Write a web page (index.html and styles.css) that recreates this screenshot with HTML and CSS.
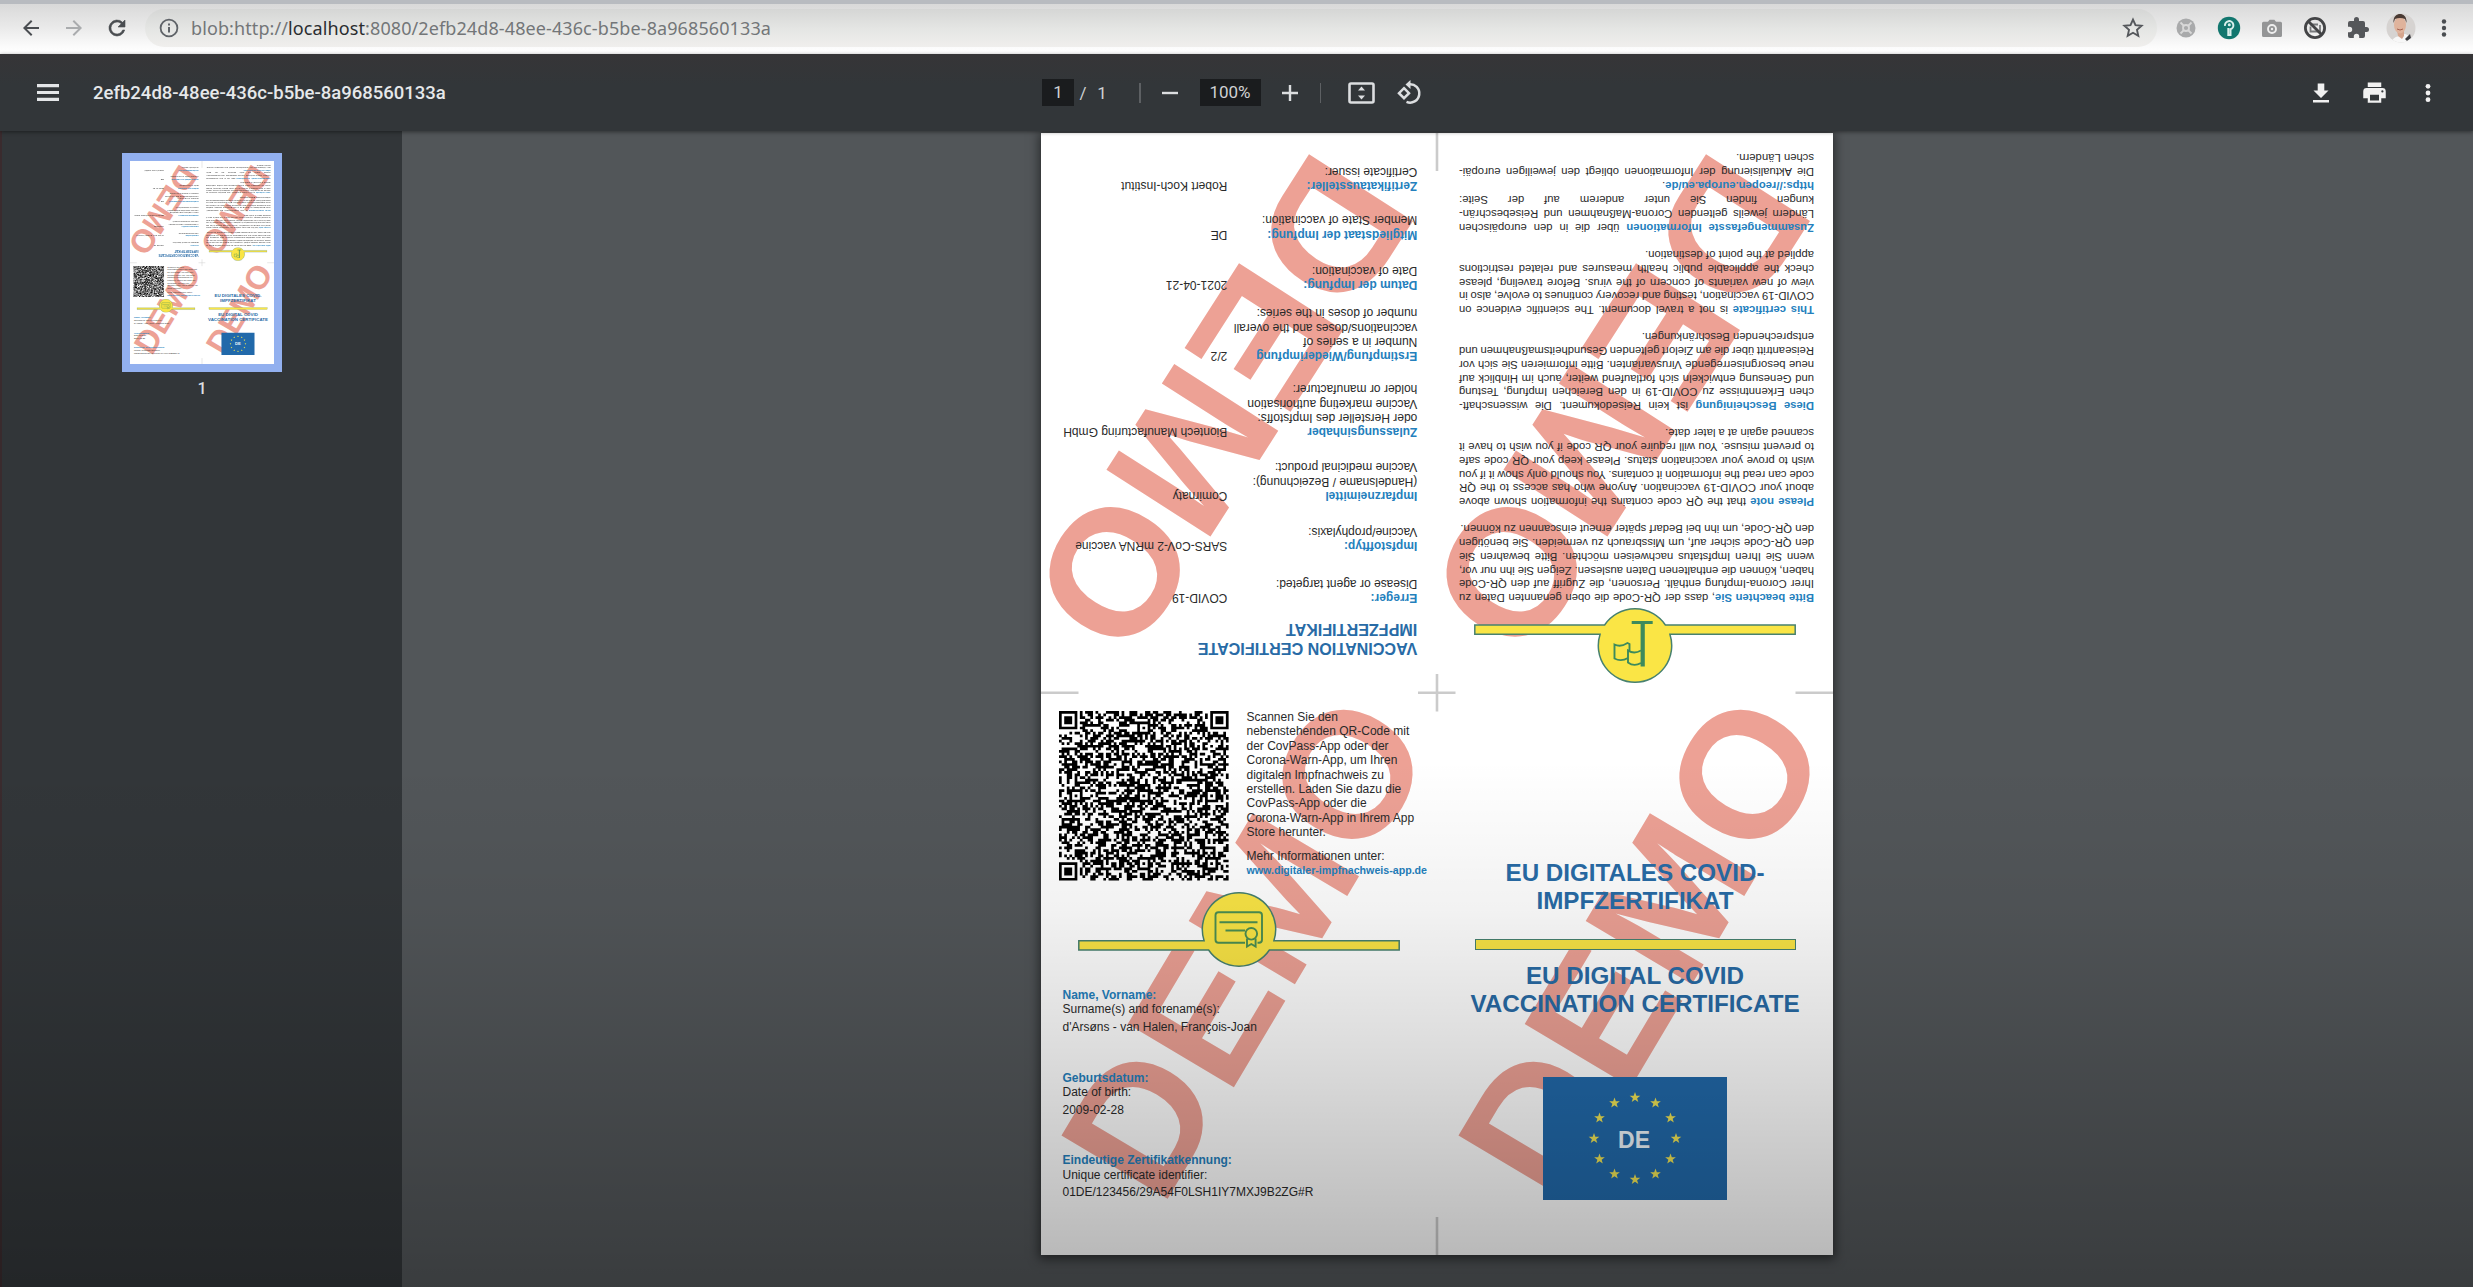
FILE: index.html
```html
<!DOCTYPE html>
<html lang="de">
<head>
<meta charset="utf-8">
<title>2efb24d8-48ee-436c-b5be-8a968560133a</title>
<link rel="stylesheet" href="styles.css">
</head>
<body>
<header class="browser">
  <nav class="nav">
    <svg class="i24" viewBox="0 0 24 24"><path d="M20 11H7.800l5.600-5.600L12 4l-8 8 8 8 1.400-1.400L7.800 13H20z" fill="#4a4d51"/></svg>
    <svg class="i24" viewBox="0 0 24 24"><path d="M4 11h12.200l-5.600-5.600L12 4l8 8-8 8-1.400-1.400 5.600-5.600H4z" fill="#aaacae"/></svg>
    <svg class="i24" viewBox="0 0 24 24"><path d="M17.650 6.350A8 8 0 1 0 19.730 14h-2.080A6 6 0 1 1 12 6c1.660 0 3.140.690 4.220 1.780L13 11h7V4z" fill="#4a4d51" stroke="#4a4d51" stroke-width=".6"/></svg>
  </nav>
  <div class="address">
    <svg class="info" viewBox="0 0 20 20"><circle cx="10" cy="10" r="8.400" fill="none" stroke="#5f6368" stroke-width="1.800"/><path d="M9 9h2v5.400H9zM9 5.600h2v2H9z" fill="#5f6368"/></svg>
    <span class="url">blob:http://<b>localhost</b>:8080/2efb24d8-48ee-436c-b5be-8a968560133a</span>
    <svg class="star" viewBox="0 0 24 24"><path d="M12 3.600l2.500 5.600 6.100.6-4.600 4.100 1.300 6L12 16.800l-5.300 3.100 1.300-6L3.400 9.800l6.100-.6z" fill="none" stroke="#55585c" stroke-width="1.900"/></svg>
  </div>
  <div class="extensions">
    <svg class="i24" viewBox="0 0 24 24"><circle cx="12" cy="12" r="9.500" fill="#a9aaab"/><g fill="none" stroke="#d8d8d8" stroke-width="1.800"><circle cx="12" cy="12" r="3"/><path d="M6.500 6.500l3 3M17.500 6.500l-3 3M6.500 17.500l3-3M17.500 17.500l-3-3"/></g></svg>
    <svg class="i24" viewBox="0 0 24 24"><circle cx="12" cy="12" r="11.200" fill="#12776f"/><path d="M8 9.800a4.200 4.200 0 1 1 5.500 3.500V19h-2.200v-7" fill="none" stroke="#d9efec" stroke-width="2"/><circle cx="12.300" cy="8.800" r="1.500" fill="#d9efec"/></svg>
    <svg class="i24" viewBox="0 0 24 24"><path d="M3.500 5.800H8l1.600-2h4.800l1.600 2h4.500A1.500 1.500 0 0 1 22 7.300v12.200a1.500 1.500 0 0 1-1.500 1.500h-17A1.500 1.500 0 0 1 2 19.500V7.300a1.500 1.500 0 0 1 1.500-1.500z" fill="#949596"/><circle cx="12" cy="13" r="4" fill="none" stroke="#eee" stroke-width="1.900"/><circle cx="12" cy="13" r="1.200" fill="#eee"/></svg>
    <svg class="i24" viewBox="0 0 24 24"><circle cx="12" cy="12" r="9.600" fill="none" stroke="#434446" stroke-width="2.800"/><path d="M7 8.500h8M17 9v7M7.500 10.500v5H15" fill="none" stroke="#77797b" stroke-width="1.800"/><path d="M5 5l14 14" stroke="#434446" stroke-width="2.800"/></svg>
    <svg class="i24" viewBox="0 0 24 24"><path d="M20.500 11H19V7a2 2 0 0 0-2-2h-4V3.500a2.500 2.500 0 0 0-5 0V5H4a2 2 0 0 0-2 2v3.800h1.500a2.700 2.700 0 0 1 0 5.400H2V20a2 2 0 0 0 2 2h3.800v-1.500a2.700 2.700 0 0 1 5.400 0V22H17a2 2 0 0 0 2-2v-4h1.500a2.500 2.500 0 0 0 0-5z" fill="#55575a"/></svg>
    <svg class="avatar" viewBox="0 0 30 30"><defs><clipPath id="face"><circle cx="15" cy="15" r="14.500"/></clipPath></defs><g clip-path="url(#face)"><path fill="#d6d3d1" d="M0 0h30v30H0z"/><path fill="#f7f7f7" d="M6 30c0-5 4-6 7-7l6-2c4 1 7 4 7 9z"/><path fill="#d5a58d" d="M11 17h7v6l-2 3-4-3z"/><ellipse cx="14" cy="12" rx="6" ry="8.500" fill="#dfb39c"/><path fill="#4a3a33" d="M7.500 10C7 3 11 1 14 1s7 2 6.500 9l-1.500-4c-3-1.500-7-1.500-10 0z"/><path d="M11 16q3 2 6 0" stroke="#a5604f" fill="none"/><path fill="#3c3c40" d="M19 26l5-5 1 4-4 3z"/></g></svg>
    <svg class="i24" viewBox="0 0 24 24" fill="#4a4d51"><circle cx="12" cy="5.500" r="2.200"/><circle cx="12" cy="12" r="2.200"/><circle cx="12" cy="18.500" r="2.200"/></svg>
  </div>
</header>

<div class="toolbar">
  <div class="tb-left">
    <svg class="menu" viewBox="0 0 22 17" fill="#e4e6e8"><path d="M0 0h22v3.200H0zM0 6.900h22v3.200H0zM0 13.800h22V17H0z"/></svg>
    <span class="doc-title">2efb24d8-48ee-436c-b5be-8a968560133a</span>
  </div>
  <div class="tb-center">
    <span class="field page-no">1</span><span class="slash">/</span><span class="total">1</span>
    <i class="sep s1"></i>
    <svg class="pm" viewBox="0 0 18 18"><path d="M1 9h16" stroke="#dcdee0" stroke-width="2.400"/></svg>
    <span class="field zoom">100%</span>
    <svg class="pm plus" viewBox="0 0 18 18"><path d="M1 9h16M9 1v16" stroke="#dcdee0" stroke-width="2.400"/></svg>
    <i class="sep s2"></i>
    <svg class="fit" viewBox="0 0 27 22"><rect x="1.500" y="1.500" width="24" height="19" rx="1.500" fill="none" stroke="#dcdee0" stroke-width="2.600"/><path d="M13.500 4.500l3.500 4h-7zM13.500 17.500l3.500-4h-7z" fill="#dcdee0"/></svg>
    <svg class="rot" viewBox="0 0 26 26"><g fill="none" stroke="#dcdee0" stroke-width="2.500"><path d="M8 8.200l5 5-5 5-5-5z"/><path d="M13 4.300a9.200 9.200 0 1 1-2.500 17.600"/></g><path d="M14.500 0v9L9.500 4.500z" fill="#dcdee0"/></svg>
  </div>
  <div class="tb-right">
    <svg class="i24" viewBox="0 0 24 24" fill="#f1f1f1"><path d="M19.500 9.500H15.300V2.500H8.700v7H4.500L12 17zM4 19v2.500h16V19z"/></svg>
    <svg class="i26" viewBox="0 0 24 24" fill="#f1f1f1"><path d="M19 8H5a3 3 0 0 0-3 3v6h4v4h12v-4h4v-6a3 3 0 0 0-3-3zm-3 11H8v-5h8zm3-7a1 1 0 1 1 0-2 1 1 0 0 1 0 2zM18 3H6v4h12z"/></svg>
    <svg class="i24" viewBox="0 0 24 24" fill="#f1f1f1"><circle cx="12" cy="5.300" r="2.400"/><circle cx="12" cy="12" r="2.400"/><circle cx="12" cy="18.700" r="2.400"/></svg>
  </div>
</div>

<div class="viewer">
  <aside class="sidebar">
    <div class="thumb" aria-hidden="true"></div>
    <span class="thumb-no">1</span>
  </aside>
  <main class="stage">
    <article class="sheet">
      <svg class="marks" viewBox="0 0 792 1122">
        <g class="demo">
          <text transform="translate(274.500 11.200) rotate(122.700)">DEMO</text>
          <text transform="translate(671.500 11.200) rotate(122.700)">DEMO</text>
          <text transform="translate(120.500 1076) rotate(-59.300)">DEMO</text>
          <text transform="translate(517.500 1076) rotate(-59.300)">DEMO</text>
        </g>
        <path d="M0 559.700h37.500M377 559.700h37.500M754.500 559.700H792M396 0v38M396 541v37.500M396 1084v38" fill="none" stroke="#cbcbcb" stroke-width="2.600"/>
      </svg>

      <section class="panel flipped data">
        <h2>VACCINATION CERTIFICATE<br>IMPFZERTIFIKAT</h2>
        <dl>
          <dt><b>Erreger:</b><br>Disease or agent targeted:</dt><dd>COVID-19</dd>
          <dt><b>Impfstofftyp:</b><br>Vaccine/prophylaxis:</dt><dd>SARS-CoV-2 mRNA vaccine</dd>
          <dt><b>Impfarzneimittel</b><br>(Handelsname / Bezeichnung):<br>Vaccine medicinal product:</dt><dd>Comirnaty</dd>
          <dt><b>Zulassungsinhaber</b><br>oder Hersteller des Impfstoffs:<br>Vaccine marketing authorisation<br>holder or manufacturer:</dt><dd>Biontech Manufacturing GmbH</dd>
          <dt><b>Erstimpfung/Wiederimpfung</b><br>Number in a series of<br>vaccinations/doses and the overall<br>number of doses in the series:</dt><dd>2/2</dd>
          <dt><b>Datum der Impfung:</b><br>Date of vaccination:</dt><dd>2021-04-21</dd>
          <dt><b>Mitgliedstaat der Impfung:</b><br>Member State of vaccination:</dt><dd>DE</dd>
          <dt><b>Zertifikataussteller:</b><br>Certificate issuer:</dt><dd>Robert Koch-Institut</dd>
        </dl>
      </section>

      <section class="panel flipped notes">
        <svg class="badge" viewBox="0 0 322 75">
          <path d="M.8 48.800H126.100A36.700 36.700 0 1 1 195.900 48.800H321.200V58H191.400A36.700 36.700 0 0 1 130.600 58H.8z" fill="#fae545" stroke="#47816f" stroke-width="1.500"/>
          <g transform="translate(161 37.500)" fill="none" stroke="#3d8a5c" stroke-width="1.900"><path d="M-17.700 23H3.300" stroke-width="3"/><path d="M-7.700-21V23" stroke-width="4.200"/><path d="M-6-17.500q7-4 13 .5V-5q-6-4-13 0M7-12.500q7-4 13.500-.5V1q-6-3-13 1.500l-2-1V-5"/></g>
        </svg>
        <p><span><b>Bitte beachten Sie</b>, dass der QR-Code die oben genannten Daten zu</span><span>Ihrer Corona-Impfung enthält. Personen, die Zugriff auf den QR-Code</span><span>haben, können die enthaltenen Daten auslesen. Zeigen Sie ihn nur vor,</span><span>wenn Sie Ihren Impfstatus nachweisen möchten. Bitte bewahren Sie</span><span>den QR-Code sicher auf, um Missbrauch zu vermeiden. Sie benötigen</span><span>den QR-Code, um ihn bei Bedarf später erneut einscannen zu können.</span></p>
        <p><span><b>Please note</b> that the QR code contains the information shown above</span><span>about your COVID-19 vaccination. Anyone who has access to the QR</span><span>code can read the information it contains. You should only show it if you</span><span>wish to prove your vaccination status. Please keep your QR code safe</span><span>to prevent misuse. You will require your QR code if you wish to have it</span><span>scanned again at a later date.</span></p>
        <p><span><b>Diese Bescheinigung</b> ist kein Reisedokument. Die wissenschaft-</span><span>chen Erkenntnisse zu COVID-19 in den Bereichen Impfung, Testung</span><span>und Genesung entwickeln sich fortlaufend weiter, auch im Hinblick auf</span><span>neue besorgniserregende Virusvarianten. Bitte informieren Sie sich vor</span><span>Reiseantritt über die am Zielort geltenden Gesundheitsmaßnahmen und</span><span>entsprechenden Beschränkungen.</span></p>
        <p><span><b>This certificate</b> is not a travel document. The scientific evidence on</span><span>COVID-19 vaccination, testing and recovery continues to evolve, also in</span><span>view of new variants of concern of the virus. Before traveling, please</span><span>check the applicable public health measures and related restrictions</span><span>applied at the point of destination.</span></p>
        <p><span><b>Zusammengefasste Informationen</b> über die in den europäischen</span><span>Ländern jeweils geltenden Corona-Maßnahmen und Reisebeschrän-</span><span>kungen finden Sie unter anderem auf der Seite:</span><span class="short"><b>https://reopen.europa.eu/de</b>.</span><span>Die Aktualisierung der Informationen obliegt den jeweiligen europäi-</span><span>schen Ländern.</span></p>
      </section>

      <section class="panel holder">
        <div class="scan">
          <svg class="qr" viewBox="0 0 65 65"><path class="modules" d=""/></svg>
          <div class="hint">Scannen Sie den<br>nebenstehenden QR-Code mit<br>der CovPass-App oder der<br>Corona-Warn-App, um Ihren<br>digitalen Impfnachweis zu<br>erstellen. Laden Sie dazu die<br>CovPass-App oder die<br>Corona-Warn-App in Ihrem App<br>Store herunter.
            <div class="more">Mehr Informationen unter:<br><b>www.digitaler-impfnachweis-app.de</b></div>
          </div>
        </div>
        <svg class="badge" viewBox="0 0 322 75">
          <path d="M.8 48.800H126.100A36.700 36.700 0 1 1 195.900 48.800H321.200V58H191.400A36.700 36.700 0 0 1 130.600 58H.8z" fill="#fae545" stroke="#47816f" stroke-width="1.500"/>
          <g transform="translate(161 37.500)" fill="none" stroke="#4b8f52" stroke-width="1.900"><path d="M6 13.300H-20.500a3 3 0 0 1-3-3V-14.300a3 3 0 0 1 3-3H20a3 3 0 0 1 3 3V10.300a3 3 0 0 1-3 3H18.500M-19.500-7.300H18.500M-13.500 1H6"/><circle cx="12.300" cy="4.300" r="5.800"/><path d="M8 9v8l4.300-2.500 4.300 2.500V9"/></g>
        </svg>
        <div class="person"><b>Name, Vorname:</b><br>Surname(s) and forename(s):<em>d'Arsøns - van Halen, François-Joan</em></div>
        <div class="person"><b>Geburtsdatum:</b><br>Date of birth:<em>2009-02-28</em></div>
        <div class="person"><b>Eindeutige Zertifikatkennung:</b><br>Unique certificate identifier:<em>01DE/123456/29A54F0LSH1IY7MXJ9B2ZG#R</em></div>
      </section>

      <section class="panel cover">
        <h1>EU DIGITALES COVID-<br>IMPFZERTIFIKAT</h1>
        <div class="rule"></div>
        <h1>EU DIGITAL COVID<br>VACCINATION CERTIFICATE</h1>
        <svg class="flag" viewBox="0 0 184 123">
          <path fill="#2169aa" d="M0 0h184v123H0z"/>
          <g class="stars" fill="#f0e455"></g>
          <text x="91" y="70.500" text-anchor="middle">DE</text>
        </svg>
      </section>
    </article>
  </main>
</div>
<div class="shade"></div>
<script src="page.js"></script>
</body>
</html>
```
FILE: styles.css
```css
* { box-sizing: border-box; }
html, body { margin: 0; height: 100%; }
body {
  display: flex;
  flex-direction: column;
  height: 1287px;
  overflow: hidden;
  font-family: "Liberation Sans", Arial, sans-serif;
  background: #525659;
}
svg { display: block; flex: none; }
.i24 { width: 24px; height: 24px; }
.i26 { width: 27px; height: 27px; }

/* Browser chrome */
.browser {
  display: flex;
  align-items: center;
  flex: none;
  height: 54px;
  padding: 0 17px 2px 19px;
  border-top: 4px solid #b8bbc0;
  background: linear-gradient(#d9d9d9, #e9e9e9 45%, #fbfbfb 85%, #fff);
}
.nav { display: flex; gap: 19px; width: 127px; }
.address {
  display: flex;
  align-items: center;
  flex: none;
  width: 2012px;
  height: 38px;
  padding: 0 12px 0 14px;
  border-radius: 19px;
  background: linear-gradient(#d5d6d5, #e4e5e3 50%, #f0efed);
}
.info { width: 20px; height: 20px; }
.url {
  flex: 1;
  margin-left: 12px;
  font: 18px/24px "Noto Sans", sans-serif;
  letter-spacing: .1px;
  color: #737678;
}
.url b { font-weight: 400; color: #2b2d2f; }
.star { width: 24px; height: 24px; }
.extensions { display: flex; align-items: center; gap: 19px; margin-left: 17px; }
.avatar { width: 30px; height: 30px; margin: 0 -3px; }

/* PDF toolbar */
.toolbar {
  position: relative;
  z-index: 2;
  display: grid;
  grid-template-columns: 1042px 1fr auto;
  align-items: center;
  flex: none;
  height: 77px;
  background: linear-gradient(#363537, #323639 40%);
  box-shadow: 0 1px 4px rgba(0, 0, 0, .45);
  color: #e6e8ea;
  font-family: Roboto, sans-serif;
}
.tb-left { display: flex; align-items: center; padding-left: 37px; gap: 34px; }
.menu { width: 22px; height: 17px; }
.doc-title { font-size: 18.500px; font-weight: 500; }
.tb-center { display: flex; align-items: center; font-size: 17px; color: #cfd1d3; }
.field { height: 27px; line-height: 27px; text-align: center; background: #1a1c1e; }
.page-no { width: 32px; }
.slash { width: 18px; text-align: center; }
.total { width: 20px; text-align: center; }
.sep { width: 1.500px; height: 20px; background: #5d6063; }
.s1 { margin: 0 20px 0 27px; }
.s2 { margin: 0 27px 0 21px; }
.pm { width: 18px; height: 18px; }
.zoom { width: 61px; margin: 0 20px 0 21px; }
.fit { width: 27px; height: 22px; }
.rot { width: 26px; height: 26px; margin-left: 21px; }
.tb-right { display: flex; align-items: center; gap: 28px; padding-right: 33px; }

/* Viewer */
.viewer { display: flex; flex: 1; min-height: 0; }
.sidebar {
  display: flex;
  flex-direction: column;
  align-items: center;
  flex: none;
  width: 402px;
  padding-top: 22px;
  border-left: 2px solid #3a2b2e;
  background: #323639;
}
.thumb {
  flex: none;
  width: 160px;
  height: 219px;
  border: 8px solid #92b0ef;
  overflow: hidden;
  background: #fff;
}
.thumb-no { margin-top: 7px; font: 500 16px/20px Roboto, sans-serif; color: #dddfe1; }
.stage { flex: 1; padding: 2px 0 0 639px; background: #525659; }

/* Document sheet */
.sheet {
  position: relative;
  display: grid;
  grid-template: 560px 562px / 396px 396px;
  width: 792px;
  height: 1122px;
  background: #fff;
  box-shadow: 0 2px 10px 2px rgba(0, 0, 0, .5);
  color: #2a2a2a;
  font-size: 12px;
  line-height: 14.400px;
}
.thumb .sheet { transform: scale(.1818); transform-origin: 0 0; box-shadow: none; }
.sheet b { color: #2480bd; }
.marks { position: absolute; inset: 0; width: 792px; height: 1122px; }
.demo text { font: bold 179.500px "Liberation Sans", Arial, sans-serif; fill: #eda195; font-kerning: none; }
.panel { position: relative; min-width: 0; }
.flipped { transform: rotate(180deg); }
.badge { width: 322px; height: 75px; margin-left: 37px; }
h1, h2 { margin: 0; color: #286ba6; }
h1 { font-size: 24.200px; line-height: 27.800px; text-align: center; }
h2 { font-size: 16.150px; line-height: 18.700px; }

.data { padding: 35px 0 0 19.700px; }
dl {
  display: grid;
  grid-template-columns: 190px 1fr;
  grid-template-rows: 51.700px 50.300px 63.700px 76px 71px 50.700px 48.600px 30px;
  margin: 15.500px 0 0;
}
dt, dd { margin: 0; white-space: nowrap; }

.notes { padding: 10px 22px 0 19px; }
.notes .badge { margin: 0 0 4px 18px; }
.notes p { width: 355px; margin: 0 0 13.700px; font-size: 11.300px; line-height: 13.720px; }
.notes p:last-child { line-height: 13.900px; }
.notes span { display: block; text-align: justify; text-align-last: justify; word-spacing: -1.500px; }
.notes span:last-child, .notes .short { text-align-last: left; word-spacing: 0; }

.holder { padding: 18px 0 0 18px; }
.scan { display: flex; gap: 18px; height: 180.500px; }
.qr { width: 169.500px; height: 169.500px; }
.hint { white-space: nowrap; margin-top: -1px; }
.more { margin-top: 9.300px; }
.more b { font-size: 10.650px; }
.holder .badge { margin-left: 19px; }
.person { height: 82.700px; margin-left: 3.500px; }
.person em { display: block; margin-top: 3px; font-style: normal; }
.holder .badge { margin-bottom: 21.500px; }

.cover { display: flex; flex-direction: column; align-items: center; padding-top: 166px; }
.rule { width: 321px; height: 10.500px; margin: 24.500px 0 12.500px; background: #fae545; border: 1.500px solid #47816f; }
.flag { width: 184px; height: 123px; margin: 59.500px 1px 0 0; }
.flag text { font: bold 23px "Liberation Sans", Arial, sans-serif; fill: #eef6fc; }

/* Darkening toward the bottom edge of the window */
.shade {
  position: absolute;
  z-index: 3;
  left: 0;
  top: 760px;
  width: 100%;
  height: 527px;
  pointer-events: none;
  background: linear-gradient(rgba(0, 0, 0, 0), rgba(0, 0, 0, .05) 28%, rgba(0, 0, 0, .135) 54%, rgba(0, 0, 0, .265) 92%, rgba(0, 0, 0, .3));
}
```
FILE: page.js
```js
// Matrix code: finder and alignment patterns over a data field.
const N = 65;
let seed = 20210421;
const rand = () => {
  seed = (seed + 0x6D2B79F5) | 0;
  let t = Math.imul(seed ^ (seed >>> 15), 1 | seed);
  t = (t + Math.imul(t ^ (t >>> 7), 61 | t)) ^ t;
  return ((t ^ (t >>> 14)) >>> 0) / 4294967296;
};
const grid = Array.from({ length: N }, () => Array.from({ length: N }, () => rand() < 0.52));
const square = (cx, cy, r, on) => {
  for (let y = -r; y <= r; y++)
    for (let x = -r; x <= r; x++)
      if (grid[cy + y] && cx + x >= 0 && cx + x < N) grid[cy + y][cx + x] = on;
};
for (const [x, y] of [[6, 32], [32, 6], [32, 32], [32, 58], [58, 32], [58, 58]]) {
  square(x, y, 2, true);
  square(x, y, 1, false);
  square(x, y, 0, true);
}
for (const [x, y] of [[3, 3], [61, 3], [3, 61]]) {
  square(x, y, 4, false);
  square(x, y, 3, true);
  square(x, y, 2, false);
  square(x, y, 1, true);
}
let d = '';
grid.forEach((row, y) => row.forEach((on, x) => {
  if (on) d += `M${x} ${y}h1.040v1.040h-1.040z`;
}));
document.querySelector('.modules').setAttribute('d', d);

// Twelve stars on a circle.
const star = (cx, cy, r) => Array.from({ length: 10 }, (_, i) => {
  const a = -Math.PI / 2 + i * Math.PI / 5;
  const q = i % 2 ? r * 0.4 : r;
  return `${(cx + q * Math.cos(a)).toFixed(2)},${(cy + q * Math.sin(a)).toFixed(2)}`;
}).join(' ');
document.querySelector('.stars').innerHTML = Array.from({ length: 12 }, (_, i) => {
  const a = i * Math.PI / 6;
  return `<polygon points="${star(92 + 41 * Math.cos(a), 61.5 + 41 * Math.sin(a), 5.6)}"/>`;
}).join('');

// The sidebar shows the same sheet, scaled down.
document.querySelector('.thumb').append(document.querySelector('.sheet').cloneNode(true));
```
